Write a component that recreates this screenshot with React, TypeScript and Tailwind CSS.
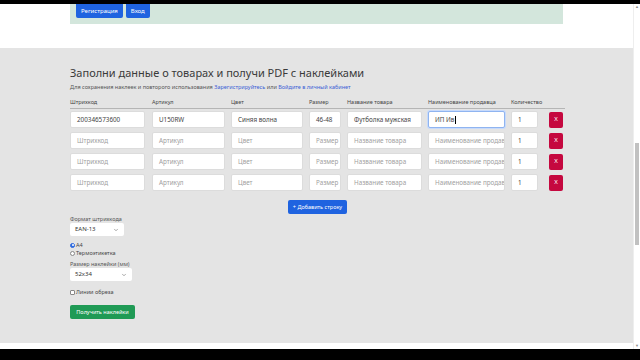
import { ChevronDown } from 'lucide-react';

const cols = 'grid grid-cols-[82px_79px_78px_38px_81px_83px_38px_15px]';

const placeholders = ['Штрихкод', 'Артикул', 'Цвет', 'Размер', 'Название товара', 'Наименование продавц'];

const rows = [
  ['200346573600', 'U150RW', 'Синяя волна', '46-48', 'Футболка мужская', 'ИП Ив'],
  null,
  null,
  null,
];

function Field({ value, placeholder, w, active }: { value?: string; placeholder: string; w: string; active?: boolean }) {
  return (
    <div
      className={`${w} h-[17px] bg-white rounded-[2px] border flex items-center pl-[6px] text-[6.3px] overflow-hidden whitespace-nowrap ${
        active ? 'border-[#8fb4f0] shadow-[0_0_0_1px_#c7dafb]' : 'border-[#dcdcdc]'
      }`}
    >
      {value ? (
        <span className="text-[#444]">
          {value}
          {active && <span className="inline-block w-px h-[8px] bg-black align-middle ml-px" />}
        </span>
      ) : (
        <span className="text-[#a0a0a0]">{placeholder}</span>
      )}
    </div>
  );
}

const widths = ['w-[75px]', 'w-[73px]', 'w-[72px]', 'w-[32px]', 'w-[75px]', 'w-[77px]'];

export default function App() {
  return (
    <div className="w-[640px] h-[360px] bg-black flex flex-col overflow-hidden" style={{ fontFamily: '"Noto Sans", "Open Sans", sans-serif' }}>
      <div className="h-[4px]" />
      <div className="h-[345px] flex">
        <div className="w-[633px] bg-white flex flex-col">
          {/* top notice panel */}
          <div className="pl-[70px]">
            <div className="w-[493px] h-[20px] bg-[#d3e6dc] flex gap-[3px] pl-[6px] items-start">
              <button className="h-[14px] px-[5px] bg-[#1f63e0] text-white text-[6px] rounded-b-[2px]">Регистрация</button>
              <button className="h-[14px] px-[5px] bg-[#1f63e0] text-white text-[6px] rounded-b-[2px]">Вход</button>
            </div>
          </div>
          <div className="h-[24px]" />

          {/* main gray section */}
          <div className="h-[295px] bg-[#e4e4e4] pl-[70px] pt-[17px]">
            <h1 className="text-[11px] leading-[16px] text-[#3a3a3a]">
              Заполни данные о товарах и получи PDF с наклейками
            </h1>
            <p className="text-[5.5px] leading-[10px] text-[#555] mt-[1px]">
              Для сохранения наклеек и повторого использования{' '}
              <span className="text-[#3b5fd6]">Зарегистрируйтесь</span> или{' '}
              <span className="text-[#3b5fd6]">Войдите в личный кабинет</span>
            </p>

            <div className="w-[495px] mt-[6px]">
              <div className={`${cols} text-[5.5px] text-[#444] h-[11px] items-center border-b border-[#b5b5b5] pb-[2px]`}>
                <span>Штрихкод</span>
                <span>Артикул</span>
                <span>Цвет</span>
                <span>Размер</span>
                <span>Название товара</span>
                <span>Наименование продавца</span>
                <span>Количество</span>
                <span />
              </div>
              <div className="flex flex-col gap-[4px] pt-[2px]">
                {rows.map((r, i) => (
                  <div key={i} className={`${cols} items-center`}>
                    {placeholders.map((p, j) => (
                      <Field key={j} placeholder={p} value={r ? r[j] : undefined} w={widths[j]} active={i === 0 && j === 5} />
                    ))}
                    <Field placeholder="" value="1" w="w-[27px]" />
                    <button className="w-[14px] h-[16px] bg-[#c5083f] text-white text-[6px] rounded-[2px] flex items-center justify-center">X</button>
                  </div>
                ))}
              </div>
            </div>

            <div className="w-[493px] flex justify-center mt-[9px]">
              <button className="h-[14px] px-[5px] bg-[#1f63e0] text-white text-[5.5px] rounded-[2px] ml-[2px]">+ Добавить строку</button>
            </div>

            <div className="text-[5.5px] text-[#555] mt-[1px] leading-[8px]">Формат штрихкода</div>
            <div className="w-[54px] h-[13px] bg-white rounded-[2px] flex items-center justify-between px-[5px] text-[6px] text-[#333]">
              <span>EAN-13</span>
              <ChevronDown size={6} strokeWidth={2} className="text-[#555]" />
            </div>

            <div className="mt-[5px] flex flex-col text-[5.5px] text-[#444] leading-[8px]">
              <div className="flex items-center gap-[1px]">
                <span className="w-[5px] h-[5px] rounded-full bg-[#2f6be0] border border-[#2f6be0] flex items-center justify-center">
                  <span className="w-[2px] h-[2px] rounded-full bg-white" />
                </span>
                <span>A4</span>
              </div>
              <div className="flex items-center gap-[1px]">
                <span className="w-[5px] h-[5px] rounded-full bg-white border border-[#888]" />
                <span>Термоэтикетка</span>
              </div>
            </div>

            <div className="text-[5.5px] text-[#555] mt-[3px] leading-[8px]">Размер наклейки (мм)</div>
            <div className="w-[62px] h-[13px] bg-white rounded-[2px] flex items-center justify-between px-[5px] text-[6px] text-[#333]">
              <span>52x34</span>
              <ChevronDown size={6} strokeWidth={2} className="text-[#555]" />
            </div>

            <div className="flex items-center gap-[1px] text-[5.5px] text-[#444] mt-[7px] leading-[8px]">
              <span className="w-[5px] h-[5px] bg-white border border-[#888] rounded-[1px]" />
              <span>Линии обреза</span>
            </div>

            <button className="mt-[2px] h-[14px] w-[65px] bg-[#1f9a55] text-white text-[5.5px] rounded-[2px]">Получить наклейки</button>
          </div>
          <div className="flex-1 bg-white" />
        </div>

        {/* scrollbar */}
        <div className="w-[7px] bg-white flex flex-col items-center border-l border-[#eee]">
          <span className="text-[4px] text-[#888] leading-[6px]">▲</span>
          <div className="w-[4px] h-[102px] bg-[#c1c1c1] mt-[133px]" />
          <div className="flex-1" />
          <span className="text-[4px] text-[#888] leading-[6px]">▼</span>
        </div>
      </div>
      <div className="flex-1 bg-black" />
    </div>
  );
}
